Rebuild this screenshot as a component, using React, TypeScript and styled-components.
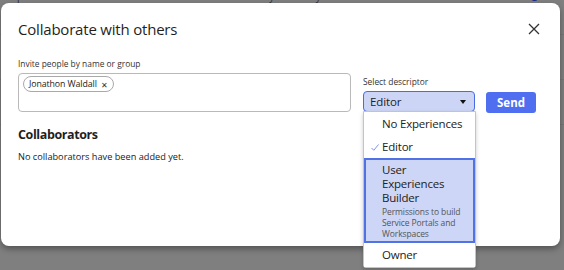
import React from "react";
import styled, { createGlobalStyle } from "styled-components";

const GlobalStyle = createGlobalStyle`
  * { box-sizing: border-box; }
  html, body { margin: 0; padding: 0; }
  body {
    font-family: "Open Sans", "Noto Sans", "Liberation Sans", sans-serif;
    background: #7f7f7f;
  }
`;

const Page = styled.div`
  position: relative;
  width: 564px;
  height: 270px;
  overflow: hidden;
  background: #7f7f7f;
`;

const BackList = styled.div`
  display: flex;
  flex-direction: column;
  margin-top: -10px;
`;

const BackRow = styled.div`
  display: grid;
  grid-template-columns: 90px 120px 140px 180px 1fr;
  height: 45px;
  font-size: 10px;
  line-height: 13px;
  color: #2e2e2e;
  border-bottom: 1px solid #777;
`;

const BackCell = styled.span<{ $link?: boolean }>`
  white-space: nowrap;
  overflow: hidden;
  color: ${(p) => (p.$link ? "#1e2f8a" : "#2e2e2e")};
  font-weight: ${(p) => (p.$link ? 700 : 400)};
`;

const Modal = styled.div`
  position: absolute;
  left: 1px;
  top: 3px;
  width: 559px;
  height: 243px;
  background: #ffffff;
  border-radius: 8px;
  box-shadow: 0 3px 6px rgba(0, 0, 0, 0.35);
  padding: 15px 17px 0 17px;
  display: flex;
  flex-direction: column;
`;

const Header = styled.div`
  display: flex;
  align-items: center;
  justify-content: space-between;
  height: 22px;
`;

const Title = styled.h2`
  margin: 0;
  font-size: 15px;
  letter-spacing: -0.2px;
  line-height: 22px;
  font-weight: 500;
  color: #1f1f1f;
`;

const CloseButton = styled.button`
  border: 0;
  background: transparent;
  padding: 0;
  width: 13px;
  height: 13px;
  margin-right: 3px;
  display: flex;
  align-items: center;
  justify-content: center;
  cursor: pointer;
`;

const InviteRow = styled.div`
  display: flex;
  align-items: flex-end;
  margin-top: 18px;
`;

const Field = styled.div<{ $w: number; $gap?: number }>`
  position: relative;
  width: ${(p) => p.$w}px;
  margin-left: ${(p) => p.$gap ?? 0}px;
  display: flex;
  flex-direction: column;
`;

const Label = styled.label`
  font-size: 8.4px;
  line-height: 12px;
  color: #333;
  margin-bottom: 3px;
`;

const TagBox = styled.div`
  height: 39px;
  border: 1px solid #b9b9b9;
  border-radius: 4px;
  padding: 2px 4px;
  display: flex;
  align-items: flex-start;
`;

const Chip = styled.span`
  display: inline-flex;
  align-items: center;
  gap: 4px;
  height: 16px;
  padding: 0 5px 0 5px;
  border: 1px solid #a9a9a9;
  border-radius: 8px;
  font-size: 8.8px;
  letter-spacing: -0.1px;
  color: #222;
  white-space: nowrap;
`;

const ChipX = styled.span`
  font-size: 8px;
  color: #333;
`;

const Select = styled.div`
  height: 21px;
  border: 1.5px solid #4a6ce0;
  border-radius: 4px;
  background: #cdd5f6;
  display: flex;
  align-items: center;
  justify-content: space-between;
  padding: 0 8px 0 6px;
  font-size: 11.5px;
  letter-spacing: -0.1px;
  color: #222;
`;

const Caret = styled.span`
  width: 0;
  height: 0;
  border-left: 3.5px solid transparent;
  border-right: 3.5px solid transparent;
  border-top: 4px solid #111;
`;

const SendButton = styled.button`
  margin-left: 11px;
  margin-bottom: -1px;
  width: 50px;
  height: 21px;
  border: 0;
  border-radius: 3px;
  background: #4f6ff0;
  color: #fff;
  font-family: inherit;
  font-size: 11.5px;
  font-weight: 700;
  padding: 0;
`;

const Menu = styled.div`
  position: absolute;
  top: 100%;
  left: 0;
  width: 113px;
  margin-top: -1px;
  background: #fff;
  border: 1px solid #c4c4c4;
  border-radius: 0 0 3px 3px;
  box-shadow: 0 2px 4px rgba(0, 0, 0, 0.2);
  z-index: 5;
`;

const MenuItem = styled.div<{ $active?: boolean; $h: number }>`
  position: relative;
  height: ${(p) => p.$h}px;
  padding: ${(p) => (p.$active ? "3px 2px 2px 16px" : "0 4px 0 18px")};
  font-size: 11.5px;
  letter-spacing: -0.2px;
  line-height: 14px;
  color: #222;
  background: ${(p) => (p.$active ? "#cdd6f6" : "#fff")};
  border: ${(p) => (p.$active ? "2px solid #5072e4" : "0")};
  display: flex;
  flex-direction: column;
  justify-content: ${(p) => (p.$active ? "flex-start" : "center")};
`;

const Check = styled.svg`
  position: absolute;
  left: 7px;
  top: 9px;
`;

const ItemDesc = styled.span`
  font-size: 8.5px;
  letter-spacing: -0.1px;
  line-height: 11px;
  color: #555;
  margin-top: 1px;
`;

const SectionTitle = styled.h3`
  margin: 14px 0 0 0;
  font-size: 12.5px;
  letter-spacing: -0.4px;
  line-height: 18px;
  font-weight: 700;
  color: #1f1f1f;
`;

const EmptyText = styled.p`
  margin: 6px 0 0 0;
  font-size: 9.2px;
  line-height: 13px;
  color: #222;
`;

const backRows = [
  ["ts up sta…", "Table", "Table is a way to store your dat…", "Last Edited 2024-07-31 10:11:01", "@ PREVIEW"],
  ["", "", "", "", "VIEW"],
  ["", "", "", "", "VIEW"],
];

export default function App() {
  return (
    <>
      <GlobalStyle />
      <Page>
        <BackList>
          {backRows.map((r, i) => (
            <BackRow key={i}>
              <BackCell>{r[0]}</BackCell>
              <BackCell>{r[1]}</BackCell>
              <BackCell>{r[2]}</BackCell>
              <BackCell>{r[3]}</BackCell>
              <BackCell $link>{r[4]}</BackCell>
            </BackRow>
          ))}
        </BackList>
        <Modal role="dialog">
          <Header>
            <Title>Collaborate with others</Title>
            <CloseButton aria-label="Close">
              <svg width="12" height="12" viewBox="0 0 12 12">
                <path d="M1 1 L11 11 M11 1 L1 11" stroke="#333" strokeWidth="1.3" fill="none" />
              </svg>
            </CloseButton>
          </Header>
          <InviteRow>
            <Field $w={333}>
              <Label>Invite people by name or group</Label>
              <TagBox>
                <Chip>
                  Jonathon Waldall <ChipX>✕</ChipX>
                </Chip>
              </TagBox>
            </Field>
            <Field $w={112} $gap={12}>
              <Label>Select descriptor</Label>
              <Select>
                Editor <Caret />
              </Select>
              <Menu>
                <MenuItem $h={23}>No Experiences</MenuItem>
                <MenuItem $h={23}>
                  <Check width="8" height="7" viewBox="0 0 8 7">
                    <path d="M0.5 4 L2.8 6.3 L7.5 0.5" stroke="#7d95e8" strokeWidth="1" fill="none" />
                  </Check>
                  Editor
                </MenuItem>
                <MenuItem $active $h={85}>
                  <span>User</span>
                  <span>Experiences</span>
                  <span>Builder</span>
                  <ItemDesc>Permissions to build Service Portals and Workspaces</ItemDesc>
                </MenuItem>
                <MenuItem $h={24}>Owner</MenuItem>
              </Menu>
            </Field>
            <SendButton>Send</SendButton>
          </InviteRow>
          <SectionTitle>Collaborators</SectionTitle>
          <EmptyText>No collaborators have been added yet.</EmptyText>
        </Modal>
      </Page>
    </>
  );
}
